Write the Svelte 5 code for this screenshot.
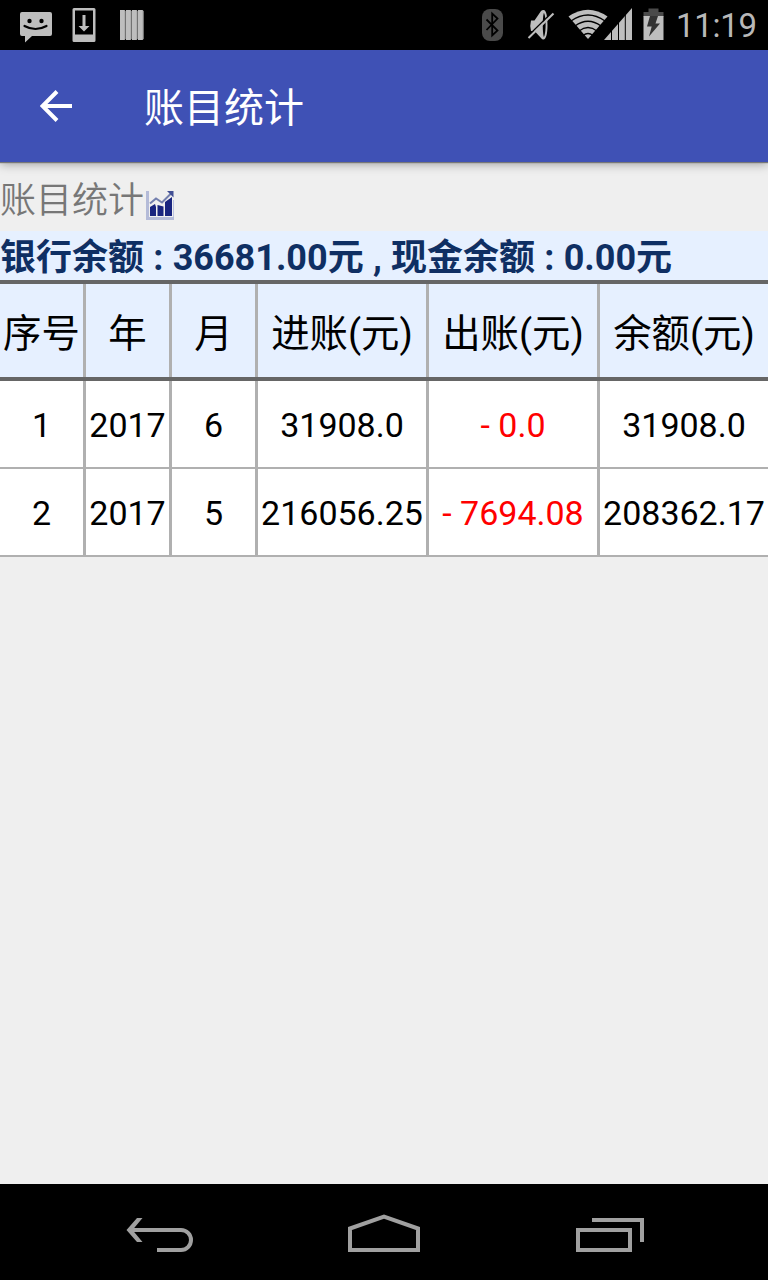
<script>
  const columns = [
    { label: '序号', key: 'index' },
    { label: '年', key: 'year' },
    { label: '月', key: 'month' },
    { label: '进账(元)', key: 'income' },
    { label: '出账(元)', key: 'expense' },
    { label: '余额(元)', key: 'balance' }
  ];
  const rows = [
    { index: '1', year: '2017', month: '6', income: '31908.0', expense: '- 0.0', balance: '31908.0' },
    { index: '2', year: '2017', month: '5', income: '216056.25', expense: '- 7694.08', balance: '208362.17' }
  ];
</script>

<div class="screen">
  <header class="status">
    <svg class="notifications" width="160" height="50" viewBox="0 0 160 50">
      <path fill="#bebebe" d="M22 12h28q2 0 2 2v20q0 2-2 2H32l-7 6.500V36h-3q-2 0-2-2V14q0-2 2-2z" />
      <circle cx="29.500" cy="21" r="2.200" /><circle cx="41.500" cy="21" r="2.200" />
      <path d="M24.500 26q11 6 22 0" fill="none" stroke="#000" stroke-width="2.200" stroke-linecap="round" />
      <path fill="#bebebe" fill-rule="evenodd" d="M74 8h20q1.500 0 1.500 1.500v31q0 1.500-1.500 1.500H74q-1.500 0-1.500-1.500v-31Q72.500 8 74 8zM75 10.500v24h18v-24z" />
      <path fill="#bebebe" d="M82.500 15h3v11h4L84 31.500 78.500 26h4z" />
      {#each [120, 126, 132, 138] as x}
        <path fill="#bebebe" d={`M${x} 10h4.500l1 1v28l-1 1H${x}z`} />
        <path stroke="#777" stroke-width="1" d={`M${x + 5.3} 11v28`} />
      {/each}
    </svg>
    <svg class="indicators" width="200" height="50" viewBox="470 0 200 50">
      <rect x="482" y="9" width="21" height="32" rx="8" fill="#4a4a4a" />
      <path d="M486.500 19.500l11 11-5.300 5V13.500l5.300 5-11 11.500" fill="none" stroke="#000" stroke-width="1.800" />
      <path fill="#bebebe" d="M531 20.500h3.500l6.500-9.500q1-1 2.500-1c3 0 4 7 4 15.500s-1.500 14-4 14q-1.500 0-2.500-1.500L534.500 31H531q-1.500-5 0-10.500z" />
      <path d="M543.800 13c2.400 2 2.400 21 0 24-1.400-5-1.400-19 0-24z" fill="#000" />
      <path d="M527.500 36.500L552.500 12" stroke="#000" stroke-width="1.400" />
      <path d="M528.500 38L553.500 13.500" stroke="#bebebe" stroke-width="2" />
      <path fill="#bebebe" d="M568.500 16.500Q588 3 607.500 16.500L588 39z" />
      <g fill="none" stroke="#000" stroke-width="1.300"><path d="M571 21Q588 9 605 21" /><path d="M575 26Q588 16.500 601 26" /><path d="M579 31Q588 24 597 31" /><path d="M583 35.500Q588 31.500 593 35.500" /></g>
      <path fill="#bebebe" d="M604 40L632 8v32z" />
      <path d="M611.500 30v10M618.500 22v18M625.300 14v26" stroke="#000" stroke-width="1" />
      <path fill="#4a4a4a" d="M648.500 8.500h10V12h5v5h-20v-5h5z" />
      <path fill="#bebebe" d="M643.500 16h20v24h-20z" />
      <path fill="#333" d="M650 16h8l-2.500 7.500h4.500L649 36.500l2.700-10H647z" />
    </svg>
    <time>11:19</time>
  </header>

  <div class="appbar">
    <svg class="arrow" width="32" height="32" viewBox="0 0 32 32">
      <path d="M32 16H3M17 1.500L2.500 16 17 30.500" fill="none" stroke="#fff" stroke-width="4" />
    </svg>
    <h1>账目统计</h1>
  </div>

  <main>
    <div class="caption">
      <span>账目统计</span>
      <svg class="chart" width="30" height="30" viewBox="0 0 30 30">
        <path d="M1.500 1v27.500H28" fill="none" stroke="#b4bbd8" stroke-width="3" />
        <path d="M27.500 10v17" stroke="#bcc3e0" stroke-width="1" />
        <path fill="#18247f" d="M4 17l5-3 1 3v9H4zM11.500 15l6 1.500V26h-6zM19 12l7-5v19h-7z" />
        <path d="M4 13.500l6-5 6 4 9-9" fill="none" stroke="#737fae" stroke-width="2" />
        <path fill="#414f94" d="M21 1h6.500v6.500z" />
      </svg>
    </div>
    <div class="summary">银行余额 : 36681.00元 , 现金余额 : 0.00元</div>
    <div class="table">
      <div class="row head">
        {#each columns as column}<div class="cell">{column.label}</div>{/each}
      </div>
      {#each rows as row}
        <div class="row">
          {#each columns as column}<div class="cell" class:expense={column.key === 'expense'}>{row[column.key]}</div>{/each}
        </div>
      {/each}
    </div>
  </main>

  <nav>
    <svg width="768" height="96" viewBox="0 1184 768 96" fill="none" stroke="#a0a0a0" stroke-width="4">
      <path d="M131 1230h50a10 10 0 0 1 0 20h-24" />
      <path fill="#a0a0a0" stroke="none" d="M137 1218h5.500l-10 12 10 12H137l-10.500-12z" />
      <path d="M350 1250v-21.500l34-12 34 12V1250z" />
      <path d="M578 1230h52v20h-52zM592 1220h50v22" />
    </svg>
  </nav>
</div>

<style>
  :global(body) { margin: 0; }
  .screen {
    width: 768px; height: 1280px; display: flex; flex-direction: column; overflow: hidden;
    background: #efefef; font-family: Roboto, "Noto Sans CJK SC", sans-serif;
  }
  .status { height: 50px; flex: none; display: flex; background: #000; }
  .indicators { margin-left: 310px; }
  time { margin-left: 6px; color: #b8b8b8; font-size: 33px; font-weight: 400; line-height: 52px; letter-spacing: -0.3px; white-space: nowrap; }
  .appbar {
    height: 112px; flex: none; display: flex; align-items: center; background: #3f51b5;
    box-shadow: 0 1px 1px #777, 0 2px 10px rgba(0, 0, 0, 0.35);
  }
  .arrow { margin-left: 40px; }
  h1 { margin: 0 0 0 72px; padding-top: 6px; color: #fff; font-size: 40px; font-weight: 400; line-height: 106px; }
  main { flex: 1; }
  .caption { height: 69px; display: flex; color: #777; font-size: 36px; line-height: 78px; font-weight: 350; }
  .caption .chart { margin: 28px 0 0 2px; }
  .summary {
    height: 49px; line-height: 55px; background: #e6f0ff; color: #0f2f63;
    font-size: 36px; font-weight: 700; word-spacing: 0.3px; white-space: nowrap;
  }
  .row {
    display: grid; grid-template-columns: 86px 86px 86px 171px 171px 168px; height: 86px;
    border-bottom: 2px solid #b0b0b0; background: #fff; color: #000; font-size: 34px; font-weight: 400;
  }
  .head { height: 93px; border-top: 4px solid #666; border-bottom: 4px solid #666; background: #e6f0ff; font-size: 38.4px; }
  .cell {
    display: flex; align-items: center; justify-content: center; min-width: 0; padding-top: 1px;
    border-right: 3px solid #b0b0b0; white-space: nowrap;
  }
  .head .cell { padding: 0 0 1px; }
  .cell:last-child { border-right: 0; }
  .expense { color: #f00; }
  nav { height: 96px; flex: none; background: #000; }
  nav svg { display: block; }
</style>
